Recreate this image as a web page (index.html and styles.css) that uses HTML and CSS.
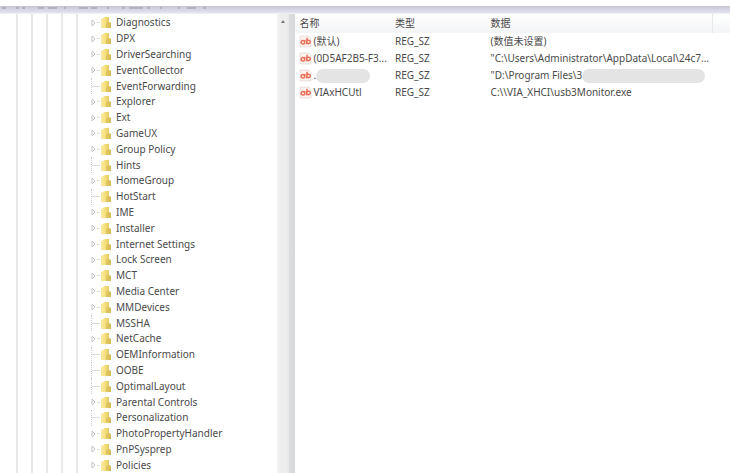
FILE: index.html
```
<!DOCTYPE html>
<html lang="zh-CN">
<head>
    <meta charset="UTF-8">
    <title>注册表编辑器</title>
    <link rel="stylesheet" href="styles.css">
</head>
<body>
<svg class="symbols" aria-hidden="true">
    <defs>
        <linearGradient id="gold" x1="0" x2="1">
            <stop offset="0" stop-color="#fbf0b4"/>
            <stop offset="0.5" stop-color="#f0da72"/>
            <stop offset="1" stop-color="#dcc25c"/>
        </linearGradient>
    </defs>
    <symbol id="folder" viewBox="0 0 12 13">
        <path d="M1 3 5 1h4v5l2 1v5H1z" fill="url(#gold)"/>
        <path d="M6 7l3-1 2 1v5H6z" fill="#cdb04a" opacity="0.4"/>
        <path d="M1 3h4v9H1z" fill="#f8e58c" opacity="0.6"/>
    </symbol>
    <symbol id="value" viewBox="0 0 12 12">
        <path d="M1 1h8l2 2v8H1z" fill="#fdf3f0" stroke="#e0d6d2" stroke-width="0.7"/>
        <path d="M5.500 4.500 5 8.500M5.200 6.500a1.600 1.600 0 1 0-3.200.500 1.600 1.600 0 1 0 3.200-.500M7.500 2.500 7 8.500M7.200 6.500a1.600 1.600 0 1 0 3.200-.300 1.600 1.600 0 1 0-3.200.300" fill="none" stroke="#e8705a" stroke-width="1.400"/>
    </symbol>
</svg>

<div class="menubar">
    <!-- lower edge of the menu captions -->
    <svg width="220" height="3" aria-hidden="true">
        <path d="M2 1h4M16 1h3M22 1h3M38 1h6M48 1h9M64 1h2M79 1h9M91 1h6M107 1h2M122 1h3M129 1h14M147 1h3M160 1h2M178 1h2M187 1h9M203 1h3"/>
    </svg>
</div>

<main class="editor">
    <nav class="tree">
        <div class="guides"><i></i><i></i><i></i><i></i><i></i></div>
        <ul class="keys" id="keys"></ul>
    </nav>
    <div class="scrollbar"><button type="button" class="scroll-up" aria-label="向上滚动"></button></div>
    <div class="splitter"></div>
    <section class="values">
        <table>
            <thead>
            <tr><th class="name">名称</th><th class="type">类型</th><th class="data">数据</th><th class="rest"></th></tr>
            </thead>
            <tbody>
            <tr>
                <td><div class="cell"><svg class="icon"><use href="#value"/></svg><span>(默认)</span></div></td>
                <td>REG_SZ</td>
                <td>(数值未设置)</td>
                <td></td>
            </tr>
            <tr>
                <td><div class="cell"><svg class="icon"><use href="#value"/></svg><span>(0D5AF2B5-F3...</span></div></td>
                <td>REG_SZ</td>
                <td>"C:\Users\Administrator\AppData\Local\24c7...</td>
                <td></td>
            </tr>
            <tr>
                <td><div class="cell"><svg class="icon"><use href="#value"/></svg><span>.</span><span class="smudge short"></span></div></td>
                <td>REG_SZ</td>
                <td><div class="cell"><span>"D:\Program Files\3</span><span class="smudge"></span></div></td>
                <td></td>
            </tr>
            <tr>
                <td><div class="cell"><svg class="icon"><use href="#value"/></svg><span>VIAxHCUtl</span></div></td>
                <td>REG_SZ</td>
                <td>C:\\VIA_XHCI\usb3Monitor.exe</td>
                <td></td>
            </tr>
            </tbody>
        </table>
    </section>
</main>

<script>
    // a leading "-" marks a key that has no subkeys
    var keys = ['Diagnostics', 'DPX', 'DriverSearching', 'EventCollector', '-EventForwarding',
        'Explorer', 'Ext', 'GameUX', 'Group Policy', '-Hints', 'HomeGroup', '-HotStart', 'IME',
        'Installer', 'Internet Settings', 'Lock Screen', 'MCT', 'Media Center', 'MMDevices',
        '-MSSHA', 'NetCache', '-OEMInformation', '-OOBE', '-OptimalLayout', 'Parental Controls',
        '-Personalization', 'PhotoPropertyHandler', 'PnPSysprep', 'Policies'];
    var html = '';
    for (var i = 0; i < keys.length; i++) {
        var leaf = keys[i].charAt(0) == '-';
        var name = leaf ? keys[i].substring(1) : keys[i];
        html += '<li class="key' + (leaf ? ' leaf' : '') + '">';
        html += leaf ? '<span class="branch"></span>'
            : '<button type="button" class="branch" aria-label="展开 ' + name + '">' +
              '<svg viewBox="0 0 5 8"><path d="M1 1l3 3-3 3z"/></svg></button>';
        html += '<svg class="folder"><use href="#folder"/></svg><span>' + name + '</span></li>';
    }
    document.querySelector('#keys').innerHTML = html;
</script>
</body>
</html>
```

FILE: styles.css
```
* {
    box-sizing: border-box;
}

body {
    display: flex;
    flex-direction: column;
    min-height: 100vh;
    margin: 0;
    background: #fff;
    color: #4a4a4a;
    font-family: "Noto Sans", "Noto Sans CJK SC", sans-serif;
    font-size: 10px;
    line-height: 15px;
}

.symbols {
    position: absolute;
    width: 0;
    height: 0;
}

.menubar {
    height: 14px;
    padding-top: 1px;
    border-top: 6px solid #fff;
    background: linear-gradient(#c4c4d2, #d4d4e2 3px, #dedeee 6px, #f4f4f8);
}

.menubar svg {
    display: block;
    fill: none;
    stroke: #9494a4;
}

.editor {
    display: flex;
    flex: 1;
}

.tree {
    display: flex;
    flex: 0 0 38%;
}

.guides {
    display: flex;
    gap: 13px;
    padding-left: 16px;
}

.guides i {
    width: 2px;
    background: #e8e8e8;
}

.keys {
    display: flex;
    flex: 1;
    flex-direction: column;
    margin: 0;
    padding: 1px 0 0 13px;
    list-style: none;
}

.key {
    display: flex;
    flex: 1;
    align-items: center;
    white-space: nowrap;
}

.branch {
    display: flex;
    align-items: center;
    align-self: stretch;
    width: 9px;
    padding: 0;
    border: none;
    background: linear-gradient(#ddd, #ddd) right / 3px 1px no-repeat;
}

.branch svg {
    width: 5px;
    height: 8px;
    fill: #fff;
    stroke: #c4c4c4;
}

.leaf .branch {
    border-left: 1px dotted #ccc;
    background: linear-gradient(#ddd, #ddd) center / 100% 1px no-repeat;
}

.folder {
    width: 12px;
    height: 13px;
    margin-right: 4px;
}

.scrollbar {
    width: 12px;
    background: linear-gradient(90deg, #f4f4f4, #eee 4px, #eee 9px, #e6e6e6);
}

.scroll-up {
    display: block;
    width: 12px;
    height: 15px;
    padding: 0;
    border: none;
    background: none;
}

.scroll-up::before {
    content: "";
    display: block;
    width: 0;
    margin: 0 auto;
    border: 2px solid transparent;
    border-top: none;
    border-bottom: 3px solid #777;
}

.splitter {
    width: 6px;
    background: linear-gradient(90deg, #dcdede, #d6d8da);
}

.values {
    flex: 1;
    min-width: 0;
}

table {
    width: 100%;
    border-collapse: collapse;
    table-layout: fixed;
}

th, td {
    height: 17px;
    padding: 0 0 0 4px;
    text-align: left;
    font-weight: normal;
    white-space: nowrap;
}

th {
    height: 19px;
    background: linear-gradient(#fff, #f3f4f6);
}

.name {
    width: 22%;
}

.type {
    width: 22%;
}

.rest {
    width: 4%;
    border-left: 1px solid #e6e8ec;
}

.cell {
    display: flex;
    align-items: center;
}

.icon {
    flex: none;
    width: 13px;
    height: 13px;
    margin-right: 1px;
}

.smudge {
    flex: 1;
    height: 14px;
    margin-right: 8px;
    border-radius: 7px;
    background: #e4e4e4;
}

.short {
    flex: none;
    width: 54px;
}
```
